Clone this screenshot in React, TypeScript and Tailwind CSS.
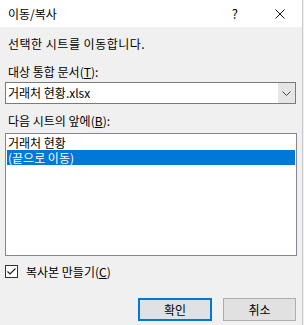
import React from 'react';

const font = { fontFamily: '"Noto Sans CJK KR", "Noto Sans", sans-serif' };

function Label({ text, mn, tail }: { text: string; mn: string; tail?: string }) {
  return (
    <div className="h-[15px] leading-[15px] text-[12px] text-black">
      {text}(<u>{mn}</u>){tail ?? ''}
    </div>
  );
}

function Chevron() {
  return (
    <svg width="9" height="5" viewBox="0 0 9 5" fill="none">
      <path d="M0.5 0.5 L4.5 4.5 L8.5 0.5" stroke="#444" strokeWidth="1" />
    </svg>
  );
}

function CheckBox() {
  return (
    <div className="w-[13px] h-[13px] border border-[#333] bg-white flex items-center justify-center">
      <svg width="11" height="11" viewBox="0 0 11 11" fill="none">
        <path d="M1.5 5.5 L4 8 L9.5 2.5" stroke="#222" strokeWidth="1.2" />
      </svg>
    </div>
  );
}

export default function App() {
  return (
    <div
      className="w-[304px] h-[325px] bg-[#f0f0f0] flex flex-col overflow-hidden select-none"
      style={font}
    >
      <div className="w-[303px] h-full flex flex-col border-r border-[#c8c8c8]">
        {/* title bar */}
        <div className="h-[27px] bg-white flex items-center text-[12px] text-black shrink-0">
          <span className="pl-[8px]">이동/복사</span>
          <span className="ml-auto mr-[37px] text-[13px]">?</span>
          <svg className="mr-[17px]" width="10" height="10" viewBox="0 0 10 10">
            <path d="M0.5 0.5 L9.5 9.5 M9.5 0.5 L0.5 9.5" stroke="#111" strokeWidth="1" />
          </svg>
        </div>

        <div className="flex flex-col px-[5px]">
          <div className="mt-[9px] pl-[3px] h-[15px] leading-[15px] text-[12px] text-black tracking-[0.5px]">
            선택한 시트를 이동합니다.
          </div>

          <div className="mt-[13px] pl-[3px]">
            <Label text="대상 통합 문서" mn="T" tail=":" />
          </div>

          {/* combobox */}
          <div className="mt-[3px] w-[291px] h-[22px] border border-[#7a7a7a] bg-white flex">
            <div className="flex-1 pl-[2px] leading-[20px] text-[12px] text-black">거래처 현황.xlsx</div>
            <div className="w-[17px] h-[20px] bg-[#e5e5e5] flex items-center justify-center">
              <Chevron />
            </div>
          </div>

          <div className="mt-[9px] pl-[3px]">
            <Label text="다음 시트의 앞에" mn="B" tail=":" />
          </div>

          {/* listbox */}
          <div className="mt-[5px] w-[292px] h-[123px] border border-[#828790] bg-white px-[1px] pt-[1px]">
            <div className="h-[15px] leading-[15px] pl-[1px] text-[12px] text-black">거래처 현황</div>
            <div className="h-[15px] leading-[15px] pl-[1px] text-[12px] text-white bg-[#0078d7]">(끝으로 이동)</div>
          </div>

          {/* checkbox */}
          <div className="mt-[9px] flex items-center gap-[8px] h-[13px]">
            <CheckBox />
            <span className="text-[12px] text-black leading-[15px]">
              복사본 만들기(<u>C</u>)
            </span>
          </div>

          {/* buttons */}
          <div className="mt-[20px] flex justify-end gap-[11px] pr-[1px]">
            <button className="w-[74px] h-[23px] bg-[#e1e1e1] border-[2px] border-[#0078d7] text-[12px] text-black flex items-center justify-center">
              확인
            </button>
            <button className="w-[73px] h-[23px] bg-[#e1e1e1] border border-[#adadad] text-[12px] text-black flex items-center justify-center">
              취소
            </button>
          </div>
        </div>
      </div>
    </div>
  );
}
